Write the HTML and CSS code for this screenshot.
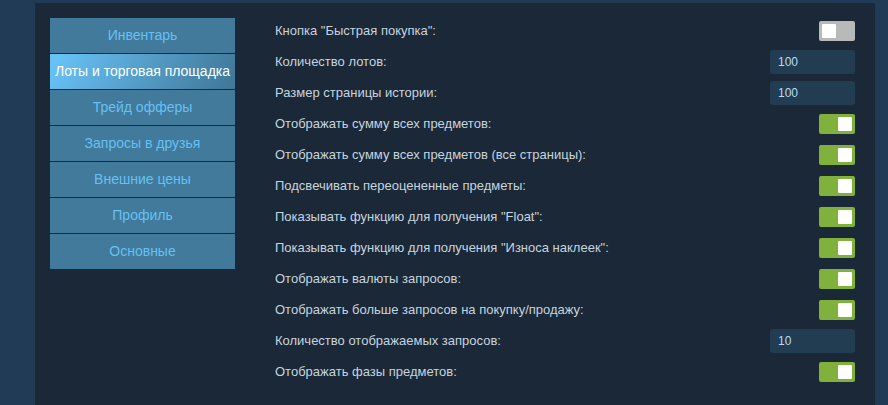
FILE: index.html
```html
<!DOCTYPE html>
<html lang="ru">
<head>
<meta charset="utf-8">
<title>Настройки</title>
<link rel="stylesheet" href="styles.css">
</head>
<body>
<div class="panel">
  <nav class="sidebar">
    <div class="tab">Инвентарь</div>
    <div class="tab active">Лоты и торговая площадка</div>
    <div class="tab">Трейд офферы</div>
    <div class="tab">Запросы в друзья</div>
    <div class="tab">Внешние цены</div>
    <div class="tab">Профиль</div>
    <div class="tab">Основные</div>
  </nav>
  <div class="settings">
    <div class="row"><span class="label">Кнопка "Быстрая покупка":</span><span class="toggle off"><span class="knob"></span></span></div>
    <div class="row"><span class="label">Количество лотов:</span><span class="input">100</span></div>
    <div class="row"><span class="label">Размер страницы истории:</span><span class="input">100</span></div>
    <div class="row"><span class="label">Отображать сумму всех предметов:</span><span class="toggle on"><span class="knob"></span></span></div>
    <div class="row"><span class="label">Отображать сумму всех предметов (все страницы):</span><span class="toggle on"><span class="knob"></span></span></div>
    <div class="row"><span class="label">Подсвечивать переоцененные предметы:</span><span class="toggle on"><span class="knob"></span></span></div>
    <div class="row"><span class="label">Показывать функцию для получения "Float":</span><span class="toggle on"><span class="knob"></span></span></div>
    <div class="row"><span class="label">Показывать функцию для получения "Износа наклеек":</span><span class="toggle on"><span class="knob"></span></span></div>
    <div class="row"><span class="label">Отображать валюты запросов:</span><span class="toggle on"><span class="knob"></span></span></div>
    <div class="row"><span class="label">Отображать больше запросов на покупку/продажу:</span><span class="toggle on"><span class="knob"></span></span></div>
    <div class="row"><span class="label">Количество отображаемых запросов:</span><span class="input">10</span></div>
    <div class="row"><span class="label">Отображать фазы предметов:</span><span class="toggle on"><span class="knob"></span></span></div>
  </div>
</div>
</body>
</html>
```
FILE: styles.css
```css
html, body {
  margin: 0;
  padding: 0;
  height: 100%;
  overflow: hidden;
}
body {
  background: #213b56;
  font-family: Arial, "Liberation Sans", sans-serif;
  padding-top: 3px;
  box-sizing: border-box;
}
.panel {
  margin: 0 13px 0 35px;
  background: #1b2838;
  min-height: 420px;
  padding: 15px 20px 0 15px;
  display: flex;
  gap: 40px;
  box-sizing: border-box;
}
.sidebar {
  width: 185px;
  flex: none;
  display: flex;
  flex-direction: column;
  gap: 1px;
  align-self: flex-start;
}
.tab {
  height: 35px;
  line-height: 35px;
  text-align: center;
  font-size: 14px;
  color: #66c0f4;
  background: #417a9b;
  white-space: nowrap;
}
.tab.active {
  color: #ffffff;
  background: linear-gradient(-60deg, #417a9b 5%, #67c1f5 95%);
}
.settings {
  flex: 1;
  margin-top: -3px;
  display: flex;
  flex-direction: column;
}
.row {
  height: 31px;
  display: flex;
  align-items: center;
  justify-content: space-between;
}
.label {
  font-size: 13px;
  color: #c6d4df;
}
.toggle {
  width: 36px;
  height: 20px;
  border-radius: 2px;
  box-sizing: border-box;
  padding: 3px;
  display: flex;
}
.toggle.off {
  background: #b8b9b9;
  justify-content: flex-start;
}
.toggle.on {
  background: #7fb13c;
  justify-content: flex-end;
}
.knob {
  width: 14px;
  height: 14px;
  background: #ffffff;
  border-radius: 1px;
}
.input {
  width: 85px;
  height: 24px;
  box-sizing: border-box;
  padding-left: 8px;
  line-height: 24px;
  font-size: 12px;
  color: #b9dcf4;
  background: #223c52;
  border-radius: 3px;
}
```
